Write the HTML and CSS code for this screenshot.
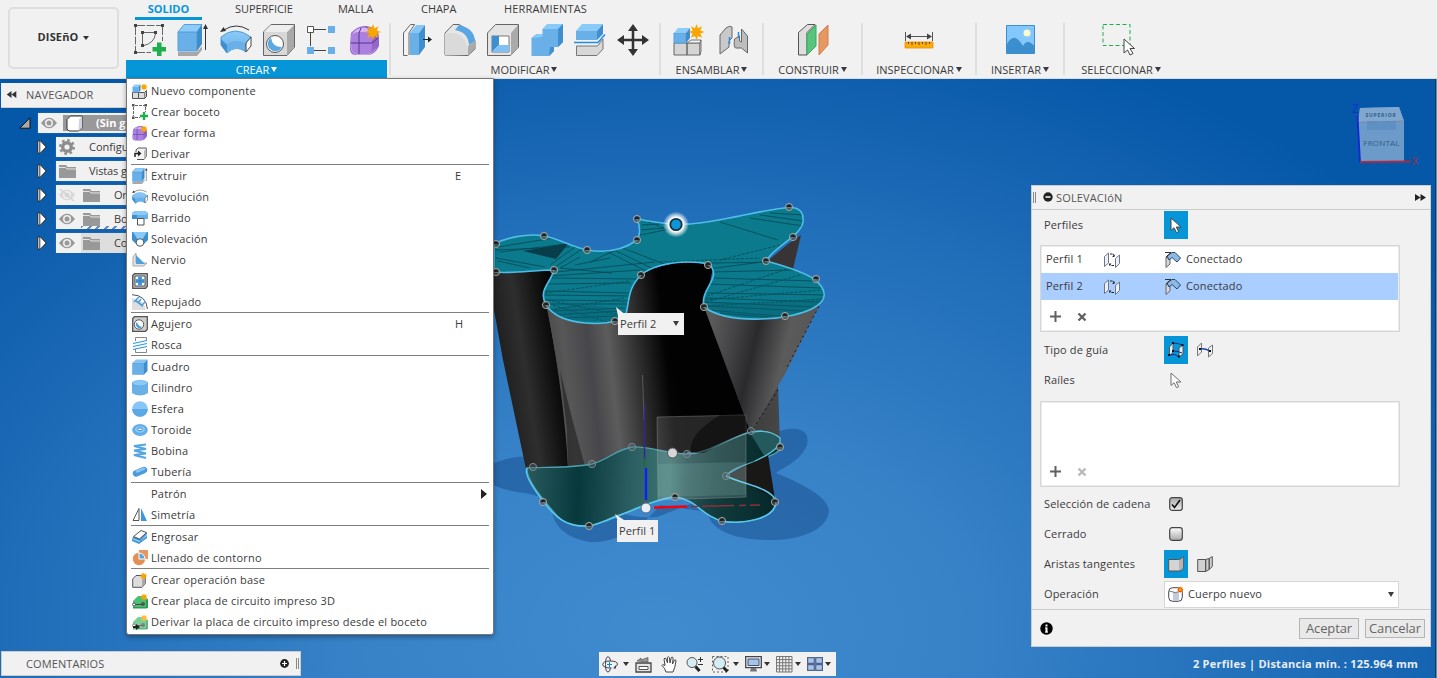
FILE: index.html
```html
<!DOCTYPE html>
<html lang="es">
<head>
<meta charset="utf-8">
<title>Diseño</title>
<link rel="stylesheet" href="styles.css">
</head>
<body>
<svg class="defs" width="0" height="0">
<defs>
<linearGradient id="gTop" x1="0" y1="0" x2="0" y2="1"><stop offset="0" stop-color="#8ccbfa"/><stop offset="1" stop-color="#66aee6"/></linearGradient>
<linearGradient id="gBox" x1="0" y1="0" x2="0" y2="1"><stop offset="0" stop-color="#fdfdfd"/><stop offset="1" stop-color="#a9a9a9"/></linearGradient>
<linearGradient id="gBoxOn" x1="0" y1="0" x2="0" y2="1"><stop offset="0" stop-color="#a9a9a9"/><stop offset="1" stop-color="#efefef"/></linearGradient>
<symbol id="star" viewBox="0 0 16 16"><path d="M8 0l1.500 4.300L13.600 2.300 11.800 6.400 16 8l-4.200 1.600 1.800 4.100-4.100-1.800L8 16l-1.500-4.100-4.100 1.800 1.800-4.100L0 8l4.200-1.600L2.400 2.300l4.100 2z" fill="#f9a602"/></symbol>
<symbol id="sketch" viewBox="0 0 32 32"><path d="M3 1.500H27M1.500 3V27M28.500 3V17M3 28.500H17" stroke="#666" fill="none" stroke-dasharray="8 1.500"/><path d="M0 0h3v3H0zM27 0h3v3h-3zM0 27h3v3H0zM7 7h3v3H7zM20 7h3v3h-3zM7 20h3v3H7z" fill="#444"/><path d="M10 8.500H20M8.500 10V20M21.500 10Q20 19 10 21.500" stroke="#666" fill="none"/><path d="M23 18.500h4.500V23H32v4.500h-4.500V32H23v-4.500h-4.500V23H23z" fill="#1fae4c"/></symbol>
<symbol id="sketch2" viewBox="0 0 16 16"><path d="M3 1.500H13M1.500 3V12M13.500 3V8M3 13.500H8" stroke="#666" fill="none" stroke-dasharray="3 1"/><path d="M0 0h2.500v2.500H0zM12.500 0H15v2.500h-2.500zM0 12.500h2.500V15H0z" fill="#555"/><path d="M10.800 8h2.400v2.800H16v2.400h-2.800V16h-2.400v-2.800H8v-2.400h2.800z" fill="#1fae4c"/></symbol>
<symbol id="extrude" viewBox="0 0 32 32"><path d="M1 28h19l5-6v4l-5 6H1z" fill="#a8a8a8"/><path d="M1 8h19v19H1z" fill="#69b0e8" stroke="#5a9fd6"/><path d="M1 8l6-7.500h18L20 8z" fill="#8dcbf8" stroke="#5a9fd6"/><path d="M20 8l5-7.500V20l-5 7z" fill="#3d8ccb"/><path d="M28.500 26V3" stroke="#333"/><path d="M28.500 0l2.500 5h-5z" fill="#333"/></symbol>
<symbol id="revolve" viewBox="0 0 32 32"><path d="M1 13Q15 1 31 13L26 28Q16 20 7 29L1 21z" fill="url(#gTop)" stroke="#4f9dd6"/><path d="M1 15l6 6v8L1 21z" fill="#3f8ecd"/><path d="M7 20q9-6 19 0v8q-10-7-19 1z" fill="#69b0e8"/><path d="M26 19l5-6v9l-5 6z" fill="#fff" stroke="#444"/><path d="M4 6Q16-2 29 6" stroke="#333" fill="none"/><path d="M0 8l3.500-5L6 7z" fill="#333"/></symbol>
<symbol id="hole" viewBox="0 0 32 32"><path d="M.5 8L8 .5h23.500V23L24 31.500H.500z" fill="#d8d8d8" stroke="#666"/><path d="M24 8l7-7v22l-7 8z" fill="#a9a9a9"/><path d="M1 8l7-7h23l-7 7z" fill="#eee"/><circle cx="12" cy="20" r="8.500" fill="#fff" stroke="#555"/><path d="M8 13.500A7.500 7.500 0 1 0 19 23Q9 23 8 13.500z" fill="#5ba8e3"/></symbol>
<symbol id="form" viewBox="0 0 32 32"><path d="M2 9Q9 1 18 2q12 2 12 12v8q-4 9-12 9H7Q0 31 1 22z" fill="#9565c8"/><path d="M2 12Q2 8 8 8h10q5 0 5 5v11q0 6-6 6H7q-5 0-5-6z" fill="#ab80e0"/><path d="M3 10Q9 2 18 4l5 6-4-2H8z" fill="#d3b5f5"/><path d="M12 4L10 9v21M2 19h21l6-5M23 11l4-3" stroke="#56348a" fill="none"/><path d="M2 20q-1 9 6 10.500h10q5 0 9-6" stroke="#c5a5ee" fill="none"/><use href="#star" x="16" y="0" width="16" height="16"/></symbol>
<symbol id="newcomp" viewBox="0 0 32 32"><path d="M1 19h13v12H1zM14 19h13v12H14z" fill="#d5d5d5" stroke="#666"/><path d="M14 19l4-3h10l-1 3zM27 19l1-3v11l-1 4z" fill="#f3f3f3" stroke="#777"/><path d="M1 9h12v10H1z" fill="#69b0e8" stroke="#5a9fd6"/><path d="M1 9l4-5h12l-4 5z" fill="#8dcbf8"/><path d="M13 9l4-5v10l-4 5z" fill="#3d8ccb"/><use href="#star" x="15.500" y="0" width="16" height="16"/></symbol>
<symbol id="newcomp2" viewBox="0 0 16 16"><path d="M.5 9.500h6v6h-6zM6.500 9.500h6v6h-6z" fill="#ddd" stroke="#555"/><path d="M12.500 9.500l2-2v6l-2 2" fill="#bbb" stroke="#555"/><path d="M.5 3.500h6v6h-6z" fill="#69b0e8"/><path d="M.5 3.500l2-2h6l-2 2z" fill="#8dcbf8"/><path d="M6.500 3.500l2-2v6l-2 2z" fill="#3d8ccb"/><use href="#star" x="8" y="0" width="8" height="8"/></symbol>
<symbol id="box" viewBox="0 0 32 32"><path d="M1 8h23v23H1z" fill="#69b0e8" stroke="#5a9fd6"/><path d="M1 8l7-7h23l-7 7z" fill="#86c5f6"/><path d="M24 8l7-7v23l-7 7z" fill="#3f8ecd"/></symbol>
<symbol id="eye" viewBox="0 0 16 12"><path d="M0 6Q8-4.500 16 6 8 16.500 0 6z" fill="#999"/><circle cx="8" cy="6" r="4" fill="#f1f1f1"/><circle cx="8" cy="6" r="2.500" fill="#999"/></symbol>
<symbol id="folder" viewBox="0 0 17 13"><path d="M0 0h7l1.500 2H17v11H0z" fill="#999"/><path d="M0 2.500h6.500l1.500 1.500H17" stroke="#e4e4e4" fill="none"/></symbol>
<symbol id="tri" viewBox="0 0 10 14"><path d="M.8.8v12.400h2.500L9.200 7 3.300.800z" fill="#fff" stroke="#222"/><path d="M2.800 1v12" stroke="#222" stroke-width=".9"/></symbol>
<symbol id="cursor" viewBox="0 0 12 17"><path d="M1 1v12.500l3-2.800 2.500 5 2.200-1-2.400-4.700H11z" fill="#fff" stroke="#444"/></symbol>
<symbol id="planes" viewBox="0 0 16 16"><path d="M.5 4.500l4-3.500v10L.5 14.500zM11.500 6.500l4-3.500v8.500l-4 4z" fill="#edf0f8" stroke="#6f7585"/><path d="M6 2h2.500m.5 0l1.500 2M10 13.500H7.500m-.5 0L5.500 12" stroke="#222" fill="none"/><path d="M10.500 2.500v2.500H8zM5 14v-2.500h2.500z" fill="#222"/></symbol>
<symbol id="conn" viewBox="0 0 16 16"><path d="M1 5l4 2v5l-4 3.500z" fill="#d7d7d7" stroke="#666"/><path d="M2 4l5-3.500h3L15.500 6 12 10 7 5.500 4 8z" fill="#8db9e4" stroke="#24486f"/><path d="M0 .5h6M1 5l5-4.500" stroke="#333"/></symbol>
<symbol id="plus" viewBox="0 0 11 11"><path d="M5.500 0v11M0 5.500h11" stroke="#606060" stroke-width="2"/></symbol>
<symbol id="ex" viewBox="0 0 10 10"><path d="M1.500 1.500l7 7M8.500 1.500l-7 7" stroke="currentColor" stroke-width="2.300"/></symbol>
<symbol id="pcb" viewBox="0 0 16 16"><path d="M1 8l5-5h4l6 3v9H1z" fill="#4cbf75"/><path d="M1 14h13v1.500H1zM14 7l2-1v9l-2 .5z" fill="#2b9a52"/><circle cx="2" cy="11.500" r="1.500" fill="#fff" stroke="#555"/><circle cx="11" cy="11" r="2" fill="#555"/><path d="M3.500 11.500h7" stroke="#444"/><use href="#star" x="8" y="0" width="8" height="8"/></symbol>
</defs>
</svg>

<div class="app">
<header class="top">
  <div class="space"><button class="space-btn">DISEñO <i class="dn"></i></button></div>
  <div class="ribbon">
    <nav class="tabs"><span class="tab on">SOLIDO</span><span class="tab t2">SUPERFICIE</span><span class="tab t3">MALLA</span><span class="tab t4">CHAPA</span><span class="tab t5">HERRAMIENTAS</span></nav>
    <div class="groups">
      <section class="group g1">
        <div class="icons">
          <svg><use href="#sketch"/></svg><svg><use href="#extrude"/></svg><svg><use href="#revolve"/></svg><svg><use href="#hole"/></svg>
          <svg viewBox="0 0 32 32"><path d="M8 5.500h12M4.500 9v13M8 26.500h12" stroke="#444"/><path d="M1.500 2.500h6v6h-6z" fill="#fff" stroke="#555"/><path d="M22 2h7v7h-7zM1 23h7v7H1zM22 23h7v7h-7z" fill="#69b0e8"/></svg>
          <svg><use href="#form"/></svg>
        </div>
        <div class="label">CREAR<i class="dn"></i></div>
      </section>
      <section class="group g2">
        <div class="icons">
          <svg viewBox="0 0 32 32"><path d="M6.500 31.500H2.500V9l7-8.500h4L8 9v22" fill="#f3f3f3" stroke="#666"/><path d="M9 9h9v22H9z" fill="#69b0e8"/><path d="M9 9l6-8h9l-6 8z" fill="#86c5f6"/><path d="M18 9l6-8v22l-6 8z" fill="#3f8ecd"/><path d="M22 15.500h6" stroke="#222"/><path d="M27 12.500l4 3-4 3z" fill="#222"/></svg>
          <svg viewBox="0 0 32 32"><path d="M1 31V9l8-8.500h6Q26 6 31 17v8l-7 6.500z" fill="#e6e6e6" stroke="#666"/><path d="M24 22l7-5v8l-7 6z" fill="#aaa"/><path d="M1 31V9h9q14 3 14 22z" fill="#dadada"/><path d="M11 6l4-5q15 3 16 16l-6 4Q24 8 11 6z" fill="#58a6e2"/></svg>
          <svg viewBox="0 0 32 32"><path d="M.5 9l8-8.500h23V23l-8 8.500H.500z" fill="#e4e4e4" stroke="#666"/><path d="M24 9l7-8v22l-7 8z" fill="#aaa"/><path d="M5 12h17v16H5z" fill="#fff" stroke="#777"/><path d="M5 12h7v9l-7 7z" fill="#3f8ecd"/><path d="M12 21h10v7H5z" fill="#7fc0f5"/></svg>
          <svg viewBox="0 0 32 32"><path d="M.5 14l5-4h6V5l5-5H32v18l-5 5h-4v4l-5 5H.500z" fill="#69b0e8"/><path d="M.5 14l5-4h6v3zM11.500 5l5-5H32l-5 5z" fill="#8acaf9"/><path d="M27 5l5-5v18l-5 5zM19 23h4v4l-5 5z" fill="#3f8ecd"/></svg>
          <svg viewBox="0 0 32 32"><path d="M2 7h21v9H2z" fill="#69b0e8"/><path d="M2 7l6-7h21l-6 7z" fill="#8acaf9"/><path d="M23 7l6-7v10l-6 6z" fill="#3f8ecd"/><path d="M0 18.500h24l7-8" fill="none" stroke="#1d8fe6" stroke-width="1.500"/><path d="M2.500 22h21l5.500-7v10l-6 6.500H2.500z" fill="#d8d8d8" stroke="#777"/></svg>
          <svg viewBox="0 0 32 32"><path d="M16 5v22M5 16h22" stroke="#333" stroke-width="2.500"/><path d="M16 0l5 7H11zM16 32l5-7H11zM0 16l7-5v10zM32 16l-7-5v10z" fill="#333"/></svg>
        </div>
        <div class="label">MODIFICAR<i class="dn"></i></div>
      </section>
      <section class="group g3">
        <div class="icons"><svg><use href="#newcomp"/></svg>
          <svg viewBox="0 0 32 32"><path d="M2 11l6-7q4-3 6-1v11l-3 3v6l-9 7z" fill="#c9c9c9" stroke="#666"/><path d="M29.500 29l-6-5h-6q-2-1-1-9l5-3v5l2 1V5l6 7z" fill="#bdbdbd" stroke="#666"/><path d="M11.500 13v7M20.500 8v6" stroke="#1d8fe6" stroke-width="1.500"/></svg></div>
        <div class="label">ENSAMBLAR<i class="dn"></i></div>
      </section>
      <section class="group g4">
        <div class="icons"><svg viewBox="0 0 32 32"><path d="M1.500 31V8.500l9-8H18l-8 8V31z" fill="#dedede" stroke="#555"/><path d="M10 10l9-9v21l-9 9z" fill="#58c47c" stroke="#39a860"/><path d="M22 10l9-9v20l-9 10z" fill="#e79862" stroke="#cf7f48"/></svg></div>
        <div class="label">CONSTRUIR<i class="dn"></i></div>
      </section>
      <section class="group g5">
        <div class="icons"><svg viewBox="0 0 32 32"><path d="M2.500 8v9M29.500 8v9M4 12.500h24" stroke="#555"/><path d="M3 12.500l5-3v6zM29 12.500l-5-3v6z" fill="#444"/><path d="M2 18h28v6H2z" fill="#fbab0c" stroke="#e59500" stroke-width=".8"/><path d="M5.500 18v2M9 18v3M12.500 18v2M16 18v3M19.500 18v2M23 18v3M26.500 18v2" stroke="#5a4a20"/></svg></div>
        <div class="label">INSPECCIONAR<i class="dn"></i></div>
      </section>
      <section class="group g6">
        <div class="icons"><svg viewBox="0 0 32 32"><path d="M2.500 1.500h28v28h-28z" fill="#84c8fb" stroke="#3c8fce"/><circle cx="23" cy="9" r="3.500" fill="#fbf9d0"/><path d="M2.500 21Q10 6 19 22q4-8 11.500 0v7.500h-28z" fill="#3c8fce"/></svg></div>
        <div class="label">INSERTAR<i class="dn"></i></div>
      </section>
      <section class="group g7">
        <div class="icons"><svg viewBox="0 0 32 32"><path d="M1 .5h27v21H1z" fill="none" stroke="#1fae4c" stroke-dasharray="4 2.500"/><path d="M22 15v14l3.500-3 2.500 5 3-1.500-3-5h4.500z" fill="#fff" stroke="#444"/></svg></div>
        <div class="label">SELECCIONAR<i class="dn"></i></div>
      </section>
    </div>
  </div>
</header>

<main class="stage">
<svg class="scene" viewBox="0 79 1437 599">
<defs>
<linearGradient id="p1" gradientUnits="userSpaceOnUse" x1="500" y1="380" x2="566" y2="370"><stop offset="0" stop-color="#1d1d1d"/><stop offset=".4" stop-color="#2e2e2e"/><stop offset=".75" stop-color="#121212"/><stop offset="1" stop-color="#020202"/></linearGradient>
<linearGradient id="p2" gradientUnits="userSpaceOnUse" x1="552" y1="385" x2="668" y2="372"><stop offset="0" stop-color="#4a4a4a"/><stop offset=".14" stop-color="#575757"/><stop offset=".35" stop-color="#47474b"/><stop offset=".52" stop-color="#5c5c5c"/><stop offset=".72" stop-color="#363636"/><stop offset="1" stop-color="#030303"/></linearGradient>
<linearGradient id="p4" gradientUnits="userSpaceOnUse" x1="708" y1="340" x2="815" y2="365"><stop offset="0" stop-color="#5a5a5a"/><stop offset=".22" stop-color="#434345"/><stop offset=".42" stop-color="#2a2a2d"/><stop offset=".7" stop-color="#5b5b5b"/><stop offset="1" stop-color="#545454"/></linearGradient>
<linearGradient id="p5" x1="0" x2="1"><stop offset="0" stop-color="#3d3d3d"/><stop offset="1" stop-color="#525252"/></linearGradient>
<linearGradient id="pb" gradientUnits="userSpaceOnUse" x1="528" y1="480" x2="780" y2="490"><stop offset="0" stop-color="#28595d"/><stop offset=".2" stop-color="#07383b"/><stop offset=".4" stop-color="#2a5d60"/><stop offset=".56" stop-color="#3d7473"/><stop offset=".63" stop-color="#255253"/><stop offset=".75" stop-color="#113b3c"/><stop offset="1" stop-color="#042627"/></linearGradient>
<radialGradient id="glow"><stop offset=".55" stop-color="#fff"/><stop offset="1" stop-color="#fff" stop-opacity="0"/></radialGradient>
<path id="topFace" d="M494 244C505 238 527 233 544 236 560 239 572 247 587 250 605 253 622 251 637 240 641 233 640 226 637 219 650 221 662 225 690 224 720 222 765 209 789 207.500 801 207 804 214 803 222 801 236 774 247 766 261 780 265 800 270 814 279 828 290 827 300 815 307 795 320 730 326 704 307 700 291 717 281 713 270 711 264 705 262 688 262 668 262 650 267 641 275 626 290 630 304 625 317 610 327 560 327 546 305 538 290 550 284 554 270 535 270 510 274 494 272Z"/>
<clipPath id="topClip"><use href="#topFace"/></clipPath>
<g id="pt"><circle r="3.600" fill="#5c5047" fill-opacity=".55" stroke="#a5a5a5"/><path d="M-2.500 0a2.500 2.500 0 0 1 5 0z" fill="#222"/></g>
<g id="pg"><circle r="3.600" fill="#667" fill-opacity=".3" stroke="#7c8b8c"/></g>
</defs>
<path d="M494 463C510 457 520 456 530 457L580 500C620 516 650 520 660 516L700 500C735 470 760 440 780 431 800 425 812 432 806 447 800 462 778 470 776 473 800 483 828 496 829 511 826 540 770 545 735 536 715 530 708 520 708 512L660 505C640 530 615 543 590 542 565 538 550 525 551 500L530 494C515 492 500 489 494 485Z" fill="#0c3c78" opacity=".38"/>
<path d="M494 271L554 269 547 305 567 420 568 467 526 469 503 360 494 310Z" fill="url(#p1)"/>
<path d="M641 275C660 262 700 258 713 268L705 306 776 502 726 476 780 446 750 432 708 452 640 452Z" fill="#020202"/>
<path d="M546 304C560 325 610 327 625 317L633 283 655 266 690 470 632 450 592 464 568 468C567 440 560 370 546 304Z" fill="url(#p2)"/>
<path d="M560 370L567 430 568 466H585Q572 420 560 370Z" fill="#262626" opacity=".7"/>
<path d="M815 305L788 362 778 384 780 446 750 432Z" fill="url(#p5)"/>
<path d="M704 307C730 326 795 320 824 296L786 372 751 433Z" fill="url(#p4)"/>
<path d="M824 297L786 369M778 390L751 432" stroke="#0a0a0a" stroke-dasharray="1.500 4"/>
<path d="M801 235L793 269 768 261Q784 246 801 235Z" fill="#383436"/>
<path d="M527 468C550 467 573 468 592 464 608 460 615 450 632 447 648 446 665 453 687 454 708 454 729 437 751 432 770 429 782 436 781 447 778 459 735 463 726 476 740 484 776 486 776 501 776 520 738 525 722 521 701 516 698 500 675 497 658 496 632 514 615 516 602 522 595 526 589 526 569 528 560 520 552 510 543 499 526 480 527 468Z" fill="url(#pb)" stroke="#4f9fae" stroke-width="1.300"/>
<path d="M726 476L768 455 775 499Q757 488 726 476Z" fill="#1a1717"/>
<path d="M527 468Q523 475 543 501C555 517 565 527 589 526 610 522 648 500 675 497 698 500 701 516 722 521 738 525 777 520 776 501 770 487 745 485 726 476" fill="none" stroke="#57c9f1" stroke-width="1.500"/>
<path d="M750 433Q770 429 780 438L781 447 765 457Z" fill="#245a5e"/>
<path d="M752 432Q770 429 780 438 782 449 755 461" fill="none" stroke="#5fc0dc" stroke-width="1.300"/>
<path d="M657 417L746 415V497L658 500Z" fill="#ddd" fill-opacity=".17" stroke="#aaa" stroke-opacity=".35"/>
<path d="M720 415H746V432Q716 446 704 453H691Q687 435 720 415Z" fill="#000" opacity=".45"/>
<path d="M658 464L746 462 746 495 658 497Z" fill="#8fd4c8" opacity=".16"/>
<path d="M642.500 375L644 420" stroke="#777" stroke-opacity=".6"/>
<path d="M644.500 405V460" stroke="#33288c" stroke-width="1.500"/><path d="M644.500 458V467" stroke="#1c6b3a" stroke-width="1.500"/>
<path d="M646 468V500" stroke="#0b20ff" stroke-width="2.300"/>
<path d="M654 507.500L687 506.500" stroke="#f5000c" stroke-width="2.300"/><path d="M691 506.500L760 505" stroke="#8a3038" stroke-dasharray="7 4 32 5" stroke-width="1.400"/>
<use href="#topFace" fill="#0b7a8d"/>
<g clip-path="url(#topClip)">
<path d="M523 251L569 243 556 259Z" fill="#083e49"/>
<path d="M498 247L560 237M500 252L575 243M495 250L570 247M496 258L545 267M498 261L530 268M550 265L575 247M555 267L582 249M560 268L580 257M590 262L620 248M620 247L685 272M612 249L660 272M606 251L650 273M640 235L670 229M640 230L664 228M642 225L660 224M760 215L803 221M770 213L804 215M750 218L803 226M720 222L778 240M700 270L770 261M710 263L790 262M712 272L795 270M712 278L815 281M710 284L822 288M707 293L826 295M705 298L820 302M704 302L815 307M706 306L804 311M708 310L790 317M720 313L780 318M550 276L640 270M552 278L637 279M548 284L631 283M545 291L629 293M545 295L629 296M545 300L628 301M547 304L627 304M552 311L625 308M554 315L620 311M562 318L616 316M556 272L655 262M560 268L612 273M575 265L610 258" stroke="#063f4a" stroke-width=".7" fill="none"/>
<path d="M705 300L822 290M707 296L790 268M708 306L824 299M706 302L800 275M550 310L625 298M548 300L625 316M553 305L610 323M545 293L630 281M648 222L668 230M660 262L760 258M720 260L780 245" stroke="#07525e" stroke-dasharray="3 1.500" fill="none"/>
<path d="M710 302Q770 305 826 297L810 310Q750 326 710 309ZM552 309Q590 300 626 312L620 322 560 320Z" fill="#08606e" opacity=".4"/>
</g>
<use href="#topFace" fill="none" stroke="#4fbde8" stroke-width="1.600"/>
<use href="#pt" x="496" y="244"/><use href="#pt" x="544" y="236"/><use href="#pt" x="587" y="250"/><use href="#pt" x="637" y="240"/><use href="#pt" x="637" y="219"/><use href="#pt" x="789" y="207"/><use href="#pt" x="793" y="237"/><use href="#pt" x="766" y="261"/><use href="#pt" x="816" y="279"/><use href="#pt" x="785" y="316"/><use href="#pt" x="704" y="307"/><use href="#pt" x="708" y="265"/><use href="#pt" x="641" y="275"/><use href="#pt" x="615" y="321"/><use href="#pt" x="546" y="305"/><use href="#pt" x="554" y="270"/><use href="#pt" x="496" y="272"/>
<use href="#pg" x="533" y="467"/><use href="#pg" x="592" y="464"/><use href="#pg" x="632" y="447"/><use href="#pg" x="687" y="454"/><use href="#pg" x="751" y="431"/><use href="#pg" x="726" y="476"/>
<use href="#pt" x="780" y="447"/><use href="#pt" x="775" y="502"/><use href="#pt" x="722" y="521"/><use href="#pt" x="675" y="497"/><use href="#pt" x="589" y="526"/><use href="#pt" x="543" y="502"/>
<circle cx="676" cy="224.500" r="13" fill="url(#glow)"/><circle cx="676" cy="224.500" r="5.700" fill="#0a96d8" stroke="#17323c" stroke-width="1.800"/>
<circle cx="672.500" cy="453" r="5" fill="#d6d6d6" stroke="#555"/><circle cx="646" cy="508" r="5" fill="#e9eef5" stroke="#56697f"/>
<path d="M616 307L627 316 619 320ZM615 514L627 522 619 524Z" fill="#f0f0f0"/>
<g class="cube"><path d="M1360 108L1399 107 1404 121V161L1360 162 1358 122Z" fill="#6c9ac9"/><path d="M1360 108L1399 107 1404 121 1358 122Z" fill="#7fa7cf"/><path d="M1358 122.500L1404 121" stroke="#8b7f95" stroke-width=".8" stroke-dasharray="20 4 9 2"/><path d="M1367 121H1396V130H1367Z" fill="#4f86bd" opacity=".5"/><path d="M1357.500 116L1360 162" stroke="#1226dc" stroke-width="1.800"/><path d="M1360 162L1410 161.500" stroke="#a92b48" stroke-width="1.800"/>
<text x="1381.500" y="146" text-anchor="middle" font-size="8" letter-spacing=".2" fill="#345c88">FRONTAL</text><text x="1381" y="116.500" text-anchor="middle" font-size="5" letter-spacing=".8" fill="#345c88" font-weight="700">SUPERIOR</text><text x="1352" y="112.500" font-size="12" fill="#1b2bd8">Z</text><text x="1412" y="165" font-size="11" fill="#a92b48">X</text></g>
</svg>

<div class="tag tag2">Perfil 2<i class="dn"></i></div>
<div class="tag tag1">Perfil 1</div>

<aside class="browser">
  <div class="bar"><svg width="11" height="7" viewBox="0 0 11 8"><path d="M5.500 0v8L0 4zM11 0v8L5.500 4z" fill="#333"/></svg><span>NAVEGADOR</span></div>
  <div class="tree">
    <div class="root"><svg width="12" height="12" viewBox="0 0 12 12"><path d="M11 .8v10.400H.800z" fill="#aaa" stroke="#111"/></svg><div class="cell"><svg class="eye"><use href="#eye"/></svg><div class="sel"><svg width="17" height="17" viewBox="0 0 17 17"><path d="M1 4.500L4.500 1H16v11.500L12.500 16H3L1 14z" fill="#fff" stroke="#333"/><path d="M13 4.500L16 1v11.500L12.500 16z" fill="#ccd3df"/></svg><b>(Sin g</b></div></div></div>
    <div class="row"><svg class="tri"><use href="#tri"/></svg><div class="cell"><svg width="16" height="16" viewBox="0 0 16 16"><circle cx="8" cy="8" r="4.300" fill="none" stroke="#8d8d8d" stroke-width="3.400"/><circle cx="8" cy="8" r="6.800" fill="none" stroke="#8d8d8d" stroke-width="2.300" stroke-dasharray="2.670 2.670"/></svg><span class="n1">Configu</span></div></div>
    <div class="row"><svg class="tri"><use href="#tri"/></svg><div class="cell"><svg class="fold"><use href="#folder"/></svg><span class="n2">Vistas g</span></div></div>
    <div class="row"><svg class="tri"><use href="#tri"/></svg><div class="cell"><svg class="eye dim" viewBox="0 0 16 12"><use href="#eye" width="16" height="12"/><path d="M1 0l14 12" stroke="#888" stroke-width="1.500"/></svg><svg class="fold f2"><use href="#folder"/></svg><span class="n3">Or</span></div></div>
    <div class="row"><svg class="tri"><use href="#tri"/></svg><div class="cell hatch"><svg class="eye"><use href="#eye"/></svg><svg class="fold f2"><use href="#folder"/></svg><span class="n3">Bo</span></div></div>
    <div class="row"><svg class="tri"><use href="#tri"/></svg><div class="cell half"><svg class="eye"><use href="#eye"/></svg><svg class="fold f2"><use href="#folder"/></svg><span class="n3">Co</span></div></div>
  </div>
</aside>

<div class="menu">
  <div class="item"><svg><use href="#newcomp2"/></svg><span>Nuevo componente</span></div>
  <div class="item"><svg><use href="#sketch2"/></svg><span>Crear boceto</span></div>
  <div class="item"><svg><use href="#form"/></svg><span>Crear forma</span></div>
  <div class="item"><svg viewBox="0 0 16 16"><path d="M4 6V4l2-2h8.500v8L12 13.500H5" fill="#f3f3f3" stroke="#555"/><path d="M12 5l2.500-3v8L12 13.500z" fill="#bbb"/><path d="M3 11V7.500h3.500" fill="none" stroke="#222" stroke-width="1.500"/><path d="M6 4.500l3.500 3L6 10.500z" fill="#222"/></svg><span>Derivar</span></div>
  <hr>
  <div class="item"><svg><use href="#extrude"/></svg><span>Extruir</span><kbd>E</kbd></div>
  <div class="item"><svg><use href="#revolve"/></svg><span>Revolución</span></div>
  <div class="item"><svg viewBox="0 0 16 16"><path d="M0 3l3-2h10l3 2v6h-4l-2 4H5V8H0z" fill="#69b0e8"/><path d="M0 3l3-2h10l3 2-2 2H0z" fill="#8acaf9"/><path d="M0 5h5v4H0z" fill="#3f8ecd"/><path d="M5.500 8.500h6.500v6.500h-6.500z" fill="#fff" stroke="#555"/></svg><span>Barrido</span></div>
  <div class="item"><svg viewBox="0 0 16 16"><path d="M0 1h16v8l-4 4H4L0 9z" fill="#3f8ecd"/><path d="M1 1h14L10 9H6z" fill="#8acaf9"/><circle cx="8" cy="11.500" r="3.800" fill="#fff" stroke="#555"/></svg><span>Solevación</span></div>
  <div class="item"><svg viewBox="0 0 16 16"><path d="M1 14V5l3-4v10h11l-3 3z" fill="#e2e2e2" stroke="#aaa"/><path d="M4 3l9 9H4z" fill="#4f9fdd"/></svg><span>Nervio</span></div>
  <div class="item"><svg viewBox="0 0 16 16"><path d="M.7 2.500L2.500.7h12.800v12.800l-1.800 1.800H.700z" fill="#bbb" stroke="#555" stroke-width="1.300"/><path d="M3 3h10v10H3z" fill="#fff" stroke="#555"/><path d="M8 3.500v9M3.500 8h9" stroke="#4f9fdd" stroke-width="4"/><path d="M8 4v8M4 8h8" stroke="#2c7fc4"/></svg><span>Red</span></div>
  <div class="item"><svg viewBox="0 0 16 16"><path d="M0 4v12h14Q12 6 0 4z" fill="#dedede"/><path d="M0 .7Q14 1 15.500 15" fill="none" stroke="#555"/><path d="M2 8l5-5M4 7l7 5M6 9l3-4M9 12l4-4" stroke="#4f9fdd" stroke-width="1.600"/></svg><span>Repujado</span></div>
  <hr>
  <div class="item"><svg viewBox="0 0 16 16"><path d="M.7 2.500L2.500.7h12.800v12.800l-1.800 1.800H.700z" fill="#ccc" stroke="#555" stroke-width="1.300"/><circle cx="7" cy="8.500" r="4.700" fill="#fff" stroke="#555"/><path d="M5 6a3.500 3.500 0 1 0 5 5Q6 10 5 6z" fill="#4f9fdd"/></svg><span>Agujero</span><kbd>H</kbd></div>
  <div class="item"><svg viewBox="0 0 16 16"><path d="M3.500 4V.500h11V4M3.500 12v3.500h11V12" fill="none" stroke="#888"/><path d="M1 6.500L15 3.500M1 9.500l14-3M1 12.500l14-3" stroke="#2f98e6" stroke-width="1.200"/></svg><span>Rosca</span></div>
  <hr>
  <div class="item"><svg><use href="#box"/></svg><span>Cuadro</span></div>
  <div class="item"><svg viewBox="0 0 16 16"><path d="M0 3v10q8 5 16 0V3z" fill="#69b0e8"/><ellipse cx="8" cy="3.200" rx="7.700" ry="2.700" fill="#8acaf9" stroke="#4f9fdd" stroke-width=".6"/></svg><span>Cilindro</span></div>
  <div class="item"><svg viewBox="0 0 16 16"><circle cx="8" cy="8" r="7.800" fill="#86c6f8"/><path d="M.2 8h15.600a7.800 7.800 0 0 1-15.600 0z" fill="#5ca8e4"/></svg><span>Esfera</span></div>
  <div class="item"><svg viewBox="0 0 16 16"><ellipse cx="8" cy="8" rx="7.800" ry="6" fill="#64ade8"/><ellipse cx="8" cy="7.500" rx="5" ry="3.200" fill="#8acaf9"/><ellipse cx="8" cy="7.300" rx="2.500" ry="1.300" fill="#fff" stroke="#3f8ecd"/></svg><span>Toroide</span></div>
  <div class="item"><svg viewBox="0 0 16 16"><path d="M14 1.500L2 3l12 3L2 7.500l12 3L2 12l12 3" fill="none" stroke="#55a5e2" stroke-width="2.100" stroke-linejoin="bevel"/></svg><span>Bobina</span></div>
  <div class="item"><svg viewBox="0 0 16 16"><path d="M4 9.500L12 6" stroke="#4b9bda" stroke-width="6.500" stroke-linecap="round"/><path d="M5 7.500L12 4.700" stroke="#86c6f8" stroke-width="2.500" stroke-linecap="round"/></svg><span>Tubería</span></div>
  <hr>
  <div class="item"><svg></svg><span>Patrón</span><svg class="sub" viewBox="0 0 6 10"><path d="M0 0l6 5-6 5z" fill="#222"/></svg></div>
  <div class="item"><svg viewBox="0 0 16 16"><path d="M7 1.500V13.500H1z" fill="#fff" stroke="#555"/><path d="M9 1l6 13H9z" fill="#3f97d9"/></svg><span>Simetría</span></div>
  <hr>
  <div class="item"><svg viewBox="0 0 16 16"><path d="M0 9l9-7 6 2v5l-8 6-7-3z" fill="#3f97d9"/><path d="M0 9l8 3 7-7v2l-8 6-7-3z" fill="#9ed4fb"/><path d="M1.500 7.500L9 1.500l5.500 2L7.500 10z" fill="#fff" stroke="#555"/></svg><span>Engrosar</span></div>
  <div class="item"><svg viewBox="0 0 16 16"><path d="M7 0h9v9h-3q0-5-6-6z" fill="#e79862"/><circle cx="7" cy="9" r="6.200" fill="#e58f58"/><path d="M7 3a6 6 0 0 1 6 6H7z" fill="#55a5e2" stroke="#fff"/></svg><span>Llenado de contorno</span></div>
  <hr>
  <div class="item"><svg viewBox="0 0 16 16"><path d="M.7 7L4 3.500h9.500v8L10 15.300H.700z" fill="#ddd" stroke="#555"/><path d="M10 7l3.500-2v6.500L10 15z" fill="#aaa"/><use href="#star" x="7.500" y="0" width="8" height="8"/></svg><span>Crear operación base</span></div>
  <div class="item"><svg><use href="#pcb"/></svg><span>Crear placa de circuito impreso 3D</span></div>
  <div class="item"><svg viewBox="0 0 16 16"><use href="#pcb" width="16" height="16" opacity=".75"/><path d="M1 13h4" stroke="#222" stroke-width="2"/><path d="M4 10l4 3-4 3z" fill="#222"/></svg><span>Derivar la placa de circuito impreso desde el boceto</span></div>
</div>

<section class="panel">
  <div class="phead"><i class="grip"></i><svg width="10" height="10" viewBox="0 0 10 10"><circle cx="5" cy="5" r="4.700" fill="#222"/><path d="M2.500 5h5" stroke="#fff" stroke-width="1.500"/></svg><span>SOLEVACIóN</span><svg class="ff" width="11" height="7" viewBox="0 0 11 7"><path d="M0 0v7l5.500-3.500zM5.500 0v7L11 3.500z" fill="#222"/></svg></div>
  <div class="prow"><label>Perfiles</label><span class="pick on"><svg width="12" height="17"><use href="#cursor"/></svg></span></div>
  <div class="list l1">
    <div class="lrow"><span>Perfil 1</span><svg class="i16"><use href="#planes"/></svg><svg class="i16 c"><use href="#conn"/></svg><span>Conectado</span></div>
    <div class="lrow hit"><span>Perfil 2</span><svg class="i16"><use href="#planes"/></svg><svg class="i16 c"><use href="#conn"/></svg><span>Conectado</span></div>
    <div class="tools"><svg width="11" height="11"><use href="#plus"/></svg><svg class="ex" width="10" height="10"><use href="#ex"/></svg></div>
  </div>
  <div class="prow"><label>Tipo de guía</label><span class="pick on"><svg width="16" height="16" viewBox="0 0 16 16"><path d="M1.500 5l3.500-4v9l-3.500 4zM11 6l4-3v9l-4 3z" fill="#e6ecf5" stroke="#555"/><path d="M5 1q5 0 9 2M2 13q5-2 9 2M5 9q5 0 9 2" stroke="#142c8b" fill="none"/><path d="M4 0h2v2H4zM13.500 2h2v2h-2zM0 12h2v2H0zM10 13.500h2v2h-2zM4 8h2v2H4z" fill="#111"/></svg></span><span class="pick"><svg width="16" height="16" viewBox="0 0 16 16"><path d="M.5 5l4-4v9l-4 4zM11.500 6l4-3v8.500l-4 3.500z" fill="#eef0f6" stroke="#777"/><path d="M3 7q4-1 10 2" stroke="#1440b0" stroke-width="1.300" fill="none"/><path d="M2 6h2v2H2zM12 8h2v2h-2z" fill="#111"/></svg></span></div>
  <div class="prow"><label>Raíles</label><span class="pick faded"><svg width="12" height="17"><use href="#cursor"/></svg></span></div>
  <div class="list l2"><div class="tools"><svg width="11" height="11"><use href="#plus"/></svg><svg class="ex off" width="10" height="10"><use href="#ex"/></svg></div></div>
  <div class="prow"><label>Selección de cadena</label><span class="pick"><svg width="14" height="14" viewBox="0 0 14 14"><rect x=".7" y=".7" width="12.600" height="12.600" rx="2.500" fill="url(#gBoxOn)" stroke="#444" stroke-width="1.200"/><path d="M3 7.500l2.500 3L11 3" fill="none" stroke="#111" stroke-width="1.600"/></svg></span></div>
  <div class="prow"><label>Cerrado</label><span class="pick"><svg width="14" height="14" viewBox="0 0 14 14"><rect x=".7" y=".7" width="12.600" height="12.600" rx="2.500" fill="url(#gBox)" stroke="#444" stroke-width="1.200"/></svg></span></div>
  <div class="prow"><label>Aristas tangentes</label><span class="pick on"><svg width="16" height="16" viewBox="0 0 16 16"><path d="M.7 3.500h10q4 0 4.600-3V12q-1 3-5 3H.700z" fill="#d4d4d4" stroke="#555"/><path d="M11 4q3 0 4-3v10q-1 3-4 3.500z" fill="#b5b5b5"/></svg></span><span class="pick"><svg width="16" height="16" viewBox="0 0 16 16"><path d="M.7 3.500h8v12h-8zM8.700 3.500l3.500-1v11l-3.500 2zM12.200 2.500L15.300.500v10l-3.100 3z" fill="#d0d0d0" stroke="#555"/></svg></span></div>
  <div class="prow"><label>Operación</label><div class="select"><svg width="16" height="16" viewBox="0 0 16 16"><rect x=".7" y="1.700" width="13.600" height="13.600" rx="4" fill="#fff" stroke="#445"/><path d="M5 6h6v9H5z" fill="#c3cad8"/><path d="M1 5q6 3 13 0" fill="none" stroke="#778"/><use href="#star" x="8.500" y="0" width="7.500" height="7.500"/><circle cx="12.300" cy="3.700" r="2" fill="none" stroke="#d8481a"/></svg><span>Cuerpo nuevo</span><i class="dn"></i></div></div>
  <div class="pfoot"><svg width="13" height="13" viewBox="0 0 13 13"><circle cx="6.500" cy="6.500" r="6.200" fill="#000"/><path d="M6.500 2.500v2M6.500 5.500v5" stroke="#fff" stroke-width="2"/><path d="M5 6h1.500M5 10h3" stroke="#fff"/></svg><button class="ok">Aceptar</button><button class="no">Cancelar</button></div>
</section>

<div class="comments"><span>COMENTARIOS</span><svg width="9" height="9" viewBox="0 0 9 9"><circle cx="4.500" cy="4.500" r="4.400" fill="#222"/><path d="M4.500 2v5M2 4.500h5" stroke="#fff" stroke-width="1.200"/></svg><i class="grip"></i></div>

<div class="viewbar">
<svg class="v1" width="17" height="17" viewBox="0 0 17 17"><path d="M9.500 12Q1 12 .7 8.500 1 5 8 5t7.500 3q0 2-3 3" fill="none" stroke="#445"/><path d="M8.500 5Q8 .7 6 .7 3.500 1 3.500 8.500T6 16q2 0 2.500-4" fill="none" stroke="#445"/><path d="M5 8.500h5M7.500 6v5" stroke="#1483dd"/><path d="M14 9v3.500h-3z" fill="#445"/></svg><i class="dn"></i>
<svg class="v2" width="17" height="17" viewBox="0 0 17 17"><path d="M1 7h15v9H1z" fill="#e4e4e4" stroke="#444" stroke-width="1.300"/><path d="M4 10.500h9v3H4z" fill="#fff" stroke="#555"/><path d="M2 5l4-3v2l7-2.500V6z" fill="#999" stroke="#555" stroke-width=".7"/></svg>
<svg class="v3" width="17" height="17" viewBox="0 0 17 17"><path d="M5 16Q4 12 1 9.500q0-2 3 0L3 3q1-2 2.200 0l1.300 4L6.300 1.500q1-1.600 2 0L9 7l1.300-5.500q1.500-1 1.800.5L11.500 8l2-4q1.500-.5 1.500 1-1 7-3 11z" fill="#fff" stroke="#444"/></svg>
<svg class="v4" width="18" height="17" viewBox="0 0 18 17"><circle cx="6" cy="6.500" r="5" fill="#d6ecf4" stroke="#555"/><path d="M9.500 10.500l4 4.500" stroke="#222" stroke-width="3"/><path d="M12 3.500h5M14.500 1v5M12 8.500h5" stroke="#333"/></svg>
<svg class="v5" width="17" height="17" viewBox="0 0 17 17"><path d="M.5.500h15.500v15.500H.500z" fill="none" stroke="#666" stroke-dasharray="2 2"/><circle cx="7.500" cy="7" r="6" fill="#d6ecf4" stroke="#555"/><path d="M11.500 11.500l4 4" stroke="#222" stroke-width="3"/></svg><i class="dn"></i>
<svg class="v6" width="17" height="16" viewBox="0 0 17 16"><path d="M.7.7h15.600v11H.700z" fill="#eee" stroke="#445" stroke-width="1.300"/><path d="M3 3h11v6.500H3z" fill="#a5c4ea" stroke="#456"/><path d="M6 12h5l1 3.500H5z" fill="#777"/></svg><i class="dn"></i>
<svg class="v7" width="17" height="17" viewBox="0 0 17 17"><path d="M.5.500h15.500v15.500H.500zM3.600.500V16M6.700.500V16M9.800.500V16M12.900.500V16M.500 3.600H16M.500 6.700H16M.500 9.800H16M.500 12.900H16" fill="none" stroke="#777"/></svg><i class="dn"></i>
<svg class="v8" width="16" height="14" viewBox="0 0 16 14"><path d="M.6.600h6.700v5.700H.600zM8.700.600h6.700v5.700H8.700zM.6 7.700h6.700v5.700H.600zM8.700 7.700h6.700v5.700H8.700z" fill="#a9c4e8" stroke="#4f6490" stroke-width="1.200"/></svg><i class="dn"></i>
</div>
<div class="status">2 Perfiles | Distancia mín. : 125.964 mm</div>
<i class="edge"></i>
</main>
</div>
</body>
</html>
```

FILE: styles.css
```css
* { box-sizing: border-box; }
body { margin: 0; width: 1437px; height: 678px; overflow: hidden; font-family: "Open Sans", "Noto Sans", sans-serif; font-size: 11px; color: #3b3b3b; }
svg { display: block; flex: none; }
.defs { position: absolute; }
.app { height: 678px; display: flex; flex-direction: column; }
.dn { display: inline-block; border: 3px solid transparent; border-top: 5px solid currentColor; border-bottom: 0; flex: none; }

/* ribbon */
.top { height: 79px; flex: none; display: flex; background: #f1f1f1; border-bottom: 1px solid #dcdcdc; }
.space { width: 126px; padding: 7px 0 0 8px; flex: none; }
.space-btn { width: 111px; height: 62px; border: 2px solid #dedede; border-radius: 5px; background: #f1f1f1; font: 700 11px "Open Sans", sans-serif; color: #333; padding: 0 0 4px; letter-spacing: .15px; }
.space-btn .dn { margin-left: 2px; vertical-align: 1px; border-top-width: 4px; }
.ribbon { flex: 1; display: flex; flex-direction: column; }
.tabs { height: 20px; flex: none; display: flex; padding-left: 9px; line-height: 17px; font-size: 11px; letter-spacing: -.05px; }
.tab { flex: none; }
.tab.on { width: 67px; text-align: center; color: #0696d7; font-weight: 700; border-bottom: 3px solid #0696d7; letter-spacing: 0; }
.t2 { margin-left: 33px; width: 103px; }
.t3 { width: 83px; }
.t4 { width: 83px; }
.t5 { letter-spacing: .15px; }
.groups { flex: 1; display: flex; }
.group { display: flex; flex-direction: column; align-items: center; flex: none; border-right: 2px solid #dedede; margin-top: 3px; padding-top: 1px; height: 52px; }
.icons { display: flex; gap: 11px; height: 36px; flex: none; }
.icons svg { width: 32px; height: 32px; }
.label { height: 17px; flex: none; line-height: 17px; white-space: nowrap; display: flex; align-items: center; gap: 2px; letter-spacing: 0; }
.g1 { width: 265px; padding-right: 2px; }
.g1 .label { width: 261px; height: 18px; background: #0696d7; color: #fff; justify-content: center; }
.g1 .icons { padding-left: 1px; }
.g2 { width: 270px; padding-right: 2px; }
.g2 .icons { gap: 11.200px; padding-left: 2px; }
.g3 { width: 103px; }
.g3 .icons { gap: 13px; }
.g4 { width: 99px; }
.g5 { width: 114px; }
.g6 { width: 88px; }
.g7 { width: 112px; border: 0; }
.g7 .icons svg { margin-right: 6px; overflow: visible; }
.group:not(.g1) .label { margin-top: 1px; }
.group .label { margin-top: 0; }

/* canvas */
.stage { position: relative; flex: 1; background: radial-gradient(ellipse 960px 640px at 46% 92%, #408bce 0%, #3883c8 30%, #1f6cb8 68%, #0557a8 100%); }
.scene { position: absolute; inset: 0; width: 1437px; height: 599px; font-family: "Open Sans", sans-serif; }
.edge { position: absolute; right: 0; top: 0; bottom: 0; width: 2px; background: #7d8790; border-left: 1px solid #0b3c74; }
.tag { position: absolute; display: flex; align-items: center; background: #f1f1f1; height: 22px; padding: 0 0 2px 2px; letter-spacing: .1px; }
.tag2 { left: 618px; top: 234px; width: 66px; justify-content: space-between; padding-right: 5px; }
.tag1 { left: 617px; top: 441px; width: 41px; }

/* browser tree */
.browser { position: absolute; left: 1px; top: 4px; width: 125px; overflow: hidden; white-space: nowrap; }
.bar { height: 25px; display: flex; align-items: center; background: #f1f1f1; border-bottom: 1px solid #cfcfcf; padding: 0 0 1px 5px; gap: 9px; color: #555; }
.bar span { letter-spacing: .15px; }
.tree { display: flex; flex-direction: column; gap: 4px; padding-top: 5px; }
.root, .row { display: flex; align-items: center; height: 20px; }
.root { padding-left: 18px; gap: 7px; }
.row { padding-left: 36px; gap: 9px; }
.cell { flex: 1; height: 20px; background: #f1f1f1; display: flex; align-items: center; padding-left: 3px; box-shadow: 0 0 2px #2d75bd; }
.cell span, .cell b { padding-bottom: 1px; }
.eye { width: 16px; height: 12px; }
.dim { opacity: .28; }
.sel { display: flex; align-items: center; height: 16px; background: #999; color: #fff; margin-left: 6px; padding-left: 3px; gap: 13px; flex: 1; }
.tri { width: 10px; height: 14px; }
.fold { width: 17px; height: 13px; }
.f2 { margin-left: 8px; }
.n1, .n2, .n3 { letter-spacing: .2px; }
.n1 { margin-left: 14px; letter-spacing: 0; }
.n2 { margin-left: 13px; letter-spacing: -.1px; }
.n3 { margin-left: 14px; letter-spacing: -.2px; }
.hatch { background: repeating-linear-gradient(135deg, #6f87ba 0 2px, #f1f1f1 2px 6px) 25px 17px / 65px 4px no-repeat, #f1f1f1; }
.half { background: linear-gradient(90deg, #f1f1f1 25px, #dedede 25px); }

/* create menu */
.menu { position: absolute; left: 126px; top: -1px; width: 368px; height: 557px; background: #fff; border: 1px solid #777; border-radius: 0 0 3px 3px; padding: 1px 4px; box-shadow: 0 2px 5px rgba(0,0,0,.35); }
.menu hr { margin: 0; border: 0; height: 1px; background: #808080; }
.item { height: 21px; display: flex; align-items: center; gap: 3px; padding-left: 1px; letter-spacing: .22px; white-space: nowrap; }
.item > svg { width: 16px; height: 16px; }
.item span { flex: 1; }
.item kbd { font: inherit; width: 34px; }
.item svg.sub { width: 6px; height: 10px; margin-right: 2px; }

/* loft dialog */
.panel { position: absolute; left: 1031px; top: 106px; width: 400px; height: 462px; background: #f1f1f1; border: 1px solid #ccc; letter-spacing: .15px; }
.phead { height: 24px; display: flex; align-items: center; border-bottom: 1px solid #ccc; color: #555; padding: 0 4px 1px 1px; }
.phead > svg:first-of-type { margin: 0 3px 0 7px; }
.grip { width: 3px; height: 11px; border: 1px solid #888; border-top: 0; border-bottom: 0; flex: none; }
.ff { margin-left: auto; }
.prow { height: 30px; display: flex; align-items: center; padding-left: 12px; }
.prow label { width: 120px; padding-bottom: 2px; }
.pick { width: 24px; height: 28px; margin-right: 5px; display: flex; align-items: center; justify-content: center; }
.pick.on { background: #0696d7; }
.faded { opacity: .75; }
.list { margin-left: 8px; width: 360px; background: #fff; border: 1px solid #d6d6d6; display: flex; flex-direction: column; box-shadow: inset 0 0 0 1px #ececec; }
.l1 { height: 87px; margin-top: 5px; margin-bottom: 3px; }
.l2 { height: 86px; margin-top: 6px; margin-bottom: 2px; }
.lrow { height: 27px; display: flex; align-items: center; padding-left: 5px; }
.lrow span { padding-bottom: 2px; }
.hit { background: #a9ceff; margin-right: 1px; }
.lrow span:first-child { width: 58px; }
.i16 { width: 16px; height: 16px; }
.c { margin-left: 45px; margin-right: 5px; }
.tools { margin-top: auto; display: flex; align-items: center; gap: 16px; padding: 0 0 9px 9px; color: #606060; }
.off { color: #b8b8b8; }
.select { width: 235px; height: 27px; background: #fff; border: 1px solid #d6d6d6; display: flex; align-items: center; gap: 4px; padding: 0 4px 0 3px; }
.select span { flex: 1; padding-bottom: 2px; }
.pfoot { border-top: 1px solid #ccc; height: 37px; display: flex; align-items: center; padding: 0 5px 0 8px; }
.pfoot button { font: 13px "Open Sans", sans-serif; color: #666; background: #e9e9e9; border: 1px solid #b5b5b5; padding: 0; line-height: 17px; letter-spacing: -.1px; }
.ok { margin-left: auto; width: 60px; height: 21px; }
.no { margin-left: 6px; width: 60px; height: 19px; }

/* bottom bars */
.comments { position: absolute; left: 1px; bottom: 2px; width: 300px; height: 25px; background: #f1f1f1; border: 1px solid #ccc; display: flex; align-items: center; padding: 0 1px 0 24px; color: #555; gap: 7px; }
.comments span { flex: 1; letter-spacing: .1px; padding-bottom: 1px; }
.viewbar { position: absolute; left: 599px; bottom: 2px; width: 237px; height: 24px; background: #f1f1f1; display: flex; align-items: center; padding-left: 3px; color: #333; }
.viewbar .dn { border-top-width: 4px; }
.v1 { margin-right: 4px; }
.v2 { margin-left: 6px; }
.v3 { margin-left: 9px; }
.v4 { margin-left: 8px; }
.v5 { margin: 0 4px 0 8px; }
.v6, .v7, .v8 { margin: 0 2px 0 6px; }
.status { position: absolute; right: 19px; bottom: 5px; line-height: 18px; color: #e8eef6; font-weight: 700; letter-spacing: .25px; }
```
